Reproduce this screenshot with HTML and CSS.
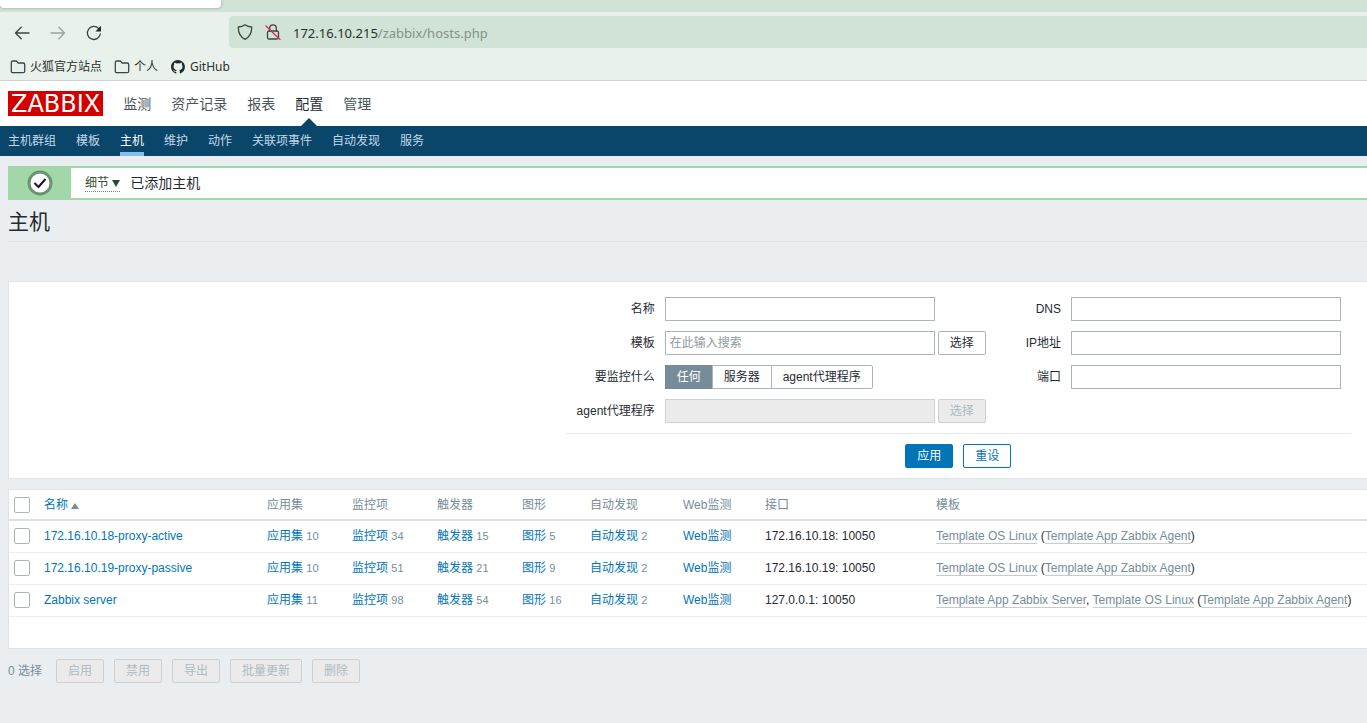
FILE: index.html
```html
<!DOCTYPE html>
<html lang="zh-CN">
<head>
<meta charset="utf-8">
<title>主机</title>
<link rel="stylesheet" href="styles.css">
</head>
<body>
<div class="browser">
  <div class="tabstrip"><div class="tab"></div></div>
  <div class="toolbar">
    <div class="tools">
      <button class="tool" type="button" aria-label="Back"><svg width="16" height="16" viewBox="0 0 16 16"><path d="M15 8H1.5M7.2 2.3L1.5 8l5.700 5.700"/></svg></button>
      <button class="tool" type="button" aria-label="Forward" disabled><svg width="16" height="16" viewBox="0 0 16 16"><path d="M1 8h13.500M8.800 2.300L14.500 8l-5.700 5.700"/></svg></button>
      <button class="tool" type="button" aria-label="Reload"><svg width="16" height="16" viewBox="0 0 16 16"><path d="M14.300 9A6.500 6.500 0 1 1 12.800 3.700"/><path class="solid" d="M15 .8v5.600H9.400z"/></svg></button>
    </div>
    <div class="urlbar">
      <svg width="16" height="16" viewBox="0 0 16 16"><path d="M8 .8C10 2.300 12.300 2.900 14.700 3c.1 5.300-1.300 9.500-6.700 12.300C2.600 12.500 1.200 8.300 1.300 3 3.700 2.900 6 2.300 8 .8z"/></svg>
      <svg width="16" height="16" viewBox="0 0 16 16"><rect x="2.500" y="7" width="11" height="8" rx="1.500"/><path d="M4.700 7V4.200a3.300 3.300 0 0 1 6.600 0V7"/><path class="strike" d="M1 2l14 13.500"/></svg>
      <div class="url">172.16.10.215<span>/zabbix/hosts.php</span></div>
    </div>
  </div>
  <div class="bookmarks">
    <a href="#"><svg width="16" height="16" viewBox="0 0 16 16"><path d="M2.800 2h3.400l2 2h5c.9 0 1.500.6 1.500 1.500v6.700c0 .9-.6 1.500-1.500 1.500H2.800c-.9 0-1.500-.6-1.500-1.500V3.500C1.300 2.600 1.900 2 2.800 2z"/></svg>火狐官方站点</a>
    <a href="#"><svg width="16" height="16" viewBox="0 0 16 16"><path d="M2.800 2h3.400l2 2h5c.9 0 1.500.6 1.500 1.500v6.700c0 .9-.6 1.500-1.500 1.500H2.800c-.9 0-1.500-.6-1.500-1.500V3.500C1.300 2.600 1.900 2 2.800 2z"/></svg>个人</a>
    <a href="#"><svg width="16" height="16" viewBox="0 0 16 16"><path class="solid" d="M8 1C4.100 1 1 4.100 1 8c0 3.100 2 5.700 4.800 6.600.4.1.5-.1.5-.3v-1.400c-2 .4-2.400-.8-2.400-.8-.3-.8-.8-1-.8-1-.6-.4.100-.4.100-.4.700.100 1.100.7 1.100.7.600 1.100 1.600.8 2 .6.100-.5.200-.8.400-1-1.500-.2-3.200-.8-3.200-3.400 0-.8.300-1.400.7-1.900-.1-.2-.3-.9.100-1.900 0 0 .6-.2 1.900.7a6.700 6.700 0 0 1 3.600 0c1.300-.9 1.900-.7 1.900-.7.400 1 .2 1.700.1 1.900.4.5.7 1.100.7 1.900 0 2.700-1.600 3.200-3.200 3.400.3.200.5.600.5 1.300v2c0 .2.100.4.500.3A7 7 0 0 0 8 1z"/></svg>GitHub</a>
  </div>
</div>

<header class="top">
  <a class="logo" href="#">ZABBIX</a>
  <nav class="menu">
    <a href="#">监测</a><a href="#">资产记录</a><a href="#">报表</a><a href="#" class="current">配置</a><a href="#">管理</a>
  </nav>
</header>
<nav class="submenu">
  <a href="#">主机群组</a><a href="#">模板</a><a href="#" class="current">主机</a><a href="#">维护</a><a href="#">动作</a><a href="#">关联项事件</a><a href="#">自动发现</a><a href="#">服务</a>
</nav>

<main>
  <div class="message">
    <div class="mark"><svg width="26" height="26" viewBox="0 0 26 26"><circle cx="13" cy="13" r="11"/><path d="M7.500 13l4 4 7-8"/></svg></div>
    <a class="details" href="#">细节 <i class="caret"></i></a>
    <span>已添加主机</span>
  </div>
  <h1>主机</h1>

  <form class="filter">
    <div class="filter-body">
      <div class="columns">
        <div class="fields">
          <label for="name">名称</label><input class="text" id="name">
          <label for="tpl">模板</label><div class="pick"><input class="text" id="tpl" placeholder="在此输入搜索"><button class="btn" type="button">选择</button></div>
          <span class="caption" id="mon">要监控什么</span>
          <div class="segments" role="radiogroup" aria-labelledby="mon">
            <input type="radio" name="m" id="m1" checked><label for="m1">任何</label>
            <input type="radio" name="m" id="m2"><label for="m2">服务器</label>
            <input type="radio" name="m" id="m3"><label for="m3">agent代理程序</label>
          </div>
          <label for="proxy">agent代理程序</label><div class="pick"><input class="text" id="proxy" disabled><button class="btn" type="button" disabled>选择</button></div>
        </div>
        <div class="fields">
          <label for="dns">DNS</label><input class="text" id="dns">
          <label for="ip">IP地址</label><input class="text" id="ip">
          <label for="port">端口</label><input class="text" id="port">
        </div>
      </div>
      <div class="actions"><button class="btn primary" type="button">应用</button><button class="btn outline" type="button">重设</button></div>
    </div>
  </form>

  <div class="list">
    <table>
      <colgroup><col class="c-check"><col class="c-name"><col class="c-count"><col class="c-count"><col class="c-count"><col class="c-graph"><col class="c-disc"><col class="c-web"><col class="c-iface"><col></colgroup>
      <thead><tr><th><input type="checkbox" aria-label="全选"></th><th><a href="#">名称<i class="sort"></i></a></th><th>应用集</th><th>监控项</th><th>触发器</th><th>图形</th><th>自动发现</th><th>Web监测</th><th>接口</th><th>模板</th></tr></thead>
      <tbody>
        <tr><td><input type="checkbox" aria-label="172.16.10.18-proxy-active"></td><td><a href="#">172.16.10.18-proxy-active</a></td><td><a href="#">应用集</a> <sup>10</sup></td><td><a href="#">监控项</a> <sup>34</sup></td><td><a href="#">触发器</a> <sup>15</sup></td><td><a href="#">图形</a> <sup>5</sup></td><td><a href="#">自动发现</a> <sup>2</sup></td><td><a href="#">Web监测</a></td><td>172.16.10.18: 10050</td><td><a class="tpl" href="#">Template OS Linux</a> (<a class="tpl" href="#">Template App Zabbix Agent</a>)</td></tr>
        <tr><td><input type="checkbox" aria-label="172.16.10.19-proxy-passive"></td><td><a href="#">172.16.10.19-proxy-passive</a></td><td><a href="#">应用集</a> <sup>10</sup></td><td><a href="#">监控项</a> <sup>51</sup></td><td><a href="#">触发器</a> <sup>21</sup></td><td><a href="#">图形</a> <sup>9</sup></td><td><a href="#">自动发现</a> <sup>2</sup></td><td><a href="#">Web监测</a></td><td>172.16.10.19: 10050</td><td><a class="tpl" href="#">Template OS Linux</a> (<a class="tpl" href="#">Template App Zabbix Agent</a>)</td></tr>
        <tr><td><input type="checkbox" aria-label="Zabbix server"></td><td><a href="#">Zabbix server</a></td><td><a href="#">应用集</a> <sup>11</sup></td><td><a href="#">监控项</a> <sup>98</sup></td><td><a href="#">触发器</a> <sup>54</sup></td><td><a href="#">图形</a> <sup>16</sup></td><td><a href="#">自动发现</a> <sup>2</sup></td><td><a href="#">Web监测</a></td><td>127.0.0.1: 10050</td><td><a class="tpl" href="#">Template App Zabbix Server</a>, <a class="tpl" href="#">Template OS Linux</a> (<a class="tpl" href="#">Template App Zabbix Agent</a>)</td></tr>
      </tbody>
    </table>
  </div>

  <div class="bulk">
    <span>0 选择</span>
    <button class="btn" type="button" disabled>启用</button>
    <button class="btn" type="button" disabled>禁用</button>
    <button class="btn" type="button" disabled>导出</button>
    <button class="btn" type="button" disabled>批量更新</button>
    <button class="btn" type="button" disabled>删除</button>
  </div>
</main>
</body>
</html>
```
FILE: styles.css
```css
* { box-sizing: border-box; }
body {
  margin: 0;
  min-height: 100vh;
  background: #ebeef0;
  color: #1f2c33;
  font: 12px/16px "Liberation Sans", "Noto Sans CJK SC", sans-serif;
}
a { color: #0275b8; text-decoration: none; }
button, input { font: inherit; color: inherit; margin: 0; }

/* browser window */
.browser {
  background: #e9f1ec;
  border-bottom: 1px solid #cfd4d1;
  font-family: "Noto Sans", "Noto Sans CJK SC", sans-serif;
}
.browser svg { fill: none; stroke: #3d4642; stroke-width: 1.3; stroke-linecap: round; stroke-linejoin: round; flex: none; }
.browser .solid { fill: #24292b; stroke: none; }
.browser .strike { stroke: #e22850; }
.tabstrip { height: 12px; background: #d1e2d7; }
.tab { width: 221px; height: 8px; background: #fff; border-radius: 0 0 4px 4px; box-shadow: 0 0 3px #8a9a90; }
.toolbar { display: flex; padding-top: 4px; }
.tools { display: flex; align-items: center; gap: 20px; width: 229px; padding: 2px 0 0 14px; }
.tool { display: flex; width: 16px; padding: 0; border: 0; background: none; }
.tool:disabled { opacity: .45; }
.urlbar {
  flex: 1;
  display: flex;
  align-items: center;
  gap: 12px;
  height: 32px;
  padding-left: 8px;
  background: #d1e2d7;
  border-radius: 4px 0 0 4px;
}
.url { padding-top: 2px; font-size: 13px; line-height: 20px; color: #2a302d; }
.url span { color: #84928a; }
.bookmarks { display: flex; gap: 12px; height: 32px; align-items: center; padding: 6px 10px 0; }
.bookmarks a { display: flex; align-items: center; gap: 4px; color: #2a302d; }

/* main navigation */
.top { display: flex; align-items: center; gap: 20px; height: 45px; padding-left: 8px; background: #fff; }
.logo {
  padding: 2px 3px 0;
  background: #d40000;
  color: #fff;
  font: 24px/23px "DejaVu Sans", sans-serif;
}
.menu { display: flex; gap: 20px; height: 45px; }
.menu a { position: relative; color: #48555d; font-size: 14px; line-height: 46px; }
.menu .current { color: #1f2c33; }
.menu .current::after {
  content: "";
  position: absolute;
  bottom: 0;
  left: 50%;
  margin-left: -8px;
  border: 8px solid transparent;
  border-top: 0;
  border-bottom-color: #0a466a;
}
.submenu { display: flex; gap: 20px; height: 30px; padding-left: 8px; background: #0a466a; }
.submenu a { color: #c3d8e6; line-height: 30px; }
.submenu .current { color: #fff; box-shadow: inset 0 -4px #7ec0ee; }

main { padding: 10px 0 0 8px; }

.message {
  display: flex;
  align-items: center;
  height: 34px;
  background: #fff;
  border: solid #a3d6a8;
  border-width: 2px 0;
  font-size: 14px;
}
.mark { display: flex; align-items: center; justify-content: center; width: 63px; height: 30px; background: #a3d6a8; }
.mark circle { fill: #fff; stroke: #6c9271; stroke-width: 3; }
.mark path { fill: none; stroke: #111a20; stroke-width: 2; }
.details { margin: 0 10px 0 14px; color: #35502f; font-size: 12px; border-bottom: 1px dotted #718a72; }
.caret, .sort { display: inline-block; border: 4px solid transparent; }
.caret { border-top: 7px solid #2b4a2b; border-bottom: 0; }
h1 { margin: 0; height: 42px; border-bottom: 1px solid #dfe4e7; font-size: 21px; font-weight: 400; line-height: 44px; }

/* controls */
.text { width: 270px; height: 24px; padding: 0 4px; border: 1px solid #acb6ba; background: #fff; }
.text::placeholder { color: #8f9a9f; opacity: 1; }
.text:disabled { background: #ebebeb; border-color: #ccd2d4; }
.btn { height: 24px; padding: 0 11px; border: 1px solid #acb6ba; border-radius: 2px; background: #fff; line-height: 22px; }
.btn:disabled { background: #ebebeb; border-color: #ccd2d4; color: #adbbc2; }
.primary { background: #0275b8; border-color: #0275b8; color: #fff; }
.outline { border-color: #0275b8; color: #0275b8; }

.filter {
  display: flex;
  justify-content: flex-end;
  margin-top: 39px;
  padding: 15px 16px 10px;
  background: #fff;
  border: 1px solid #dfe4e7;
  border-right: 0;
}
.columns { display: flex; gap: 40px; padding: 0 10px 10px 0; align-items: flex-start; }
.fields { display: grid; grid-template-columns: auto auto; gap: 10px; align-items: center; text-align: right; }
.fields:first-child { grid-template-columns: 89px auto; }
.fields > label, .caption { line-height: 24px; }
.pick { display: flex; gap: 3px; }
.segments { display: flex; text-align: center; }
.segments input { position: absolute; opacity: 0; }
.segments label { height: 24px; padding: 0 11px; border: 1px solid #acb6ba; line-height: 22px; }
.segments label + input + label { margin-left: -1px; }
.segments label:last-child { border-radius: 0 2px 2px 0; }
.segments input:checked + label { background: #768d99; border-color: #768d99; color: #fff; }
.actions { display: flex; justify-content: center; gap: 10px; padding-top: 10px; border-top: 1px solid #e6ebee; }

/* host list */
.list { margin-top: 10px; padding-bottom: 31px; background: #fff; border: 1px solid #dfe4e7; border-right: 0; }
table { width: 100%; table-layout: fixed; border-collapse: separate; border-spacing: 0; }
.c-check { width: 30px; }
.c-name { width: 223px; }
.c-count { width: 85px; }
.c-graph { width: 68px; }
.c-disc { width: 93px; }
.c-web { width: 82px; }
.c-iface { width: 171px; }
th, td { padding: 0 5px; text-align: left; font-weight: 400; white-space: nowrap; vertical-align: middle; }
th { height: 31px; color: #768d99; border-bottom: 2px solid #dcdfe1; }
td { height: 32px; padding-bottom: 2px; border-bottom: 1px solid #ebeef0; }
sup { font-size: 11px; line-height: 1; vertical-align: baseline; color: #768d99; }
.sort { margin-left: 3px; border-bottom: 6px solid #768d99; border-top: 0; }
.tpl { color: #768d99; border-bottom: 1px solid #c3cdd2; }
input[type="checkbox"] { display: block; appearance: none; width: 16px; height: 16px; border: 1px solid #acb6ba; border-radius: 2px; background: #fff; }

.bulk { display: flex; align-items: center; gap: 10px; padding: 10px 0; color: #768d99; }
.bulk span { margin-right: 4px; }
```
